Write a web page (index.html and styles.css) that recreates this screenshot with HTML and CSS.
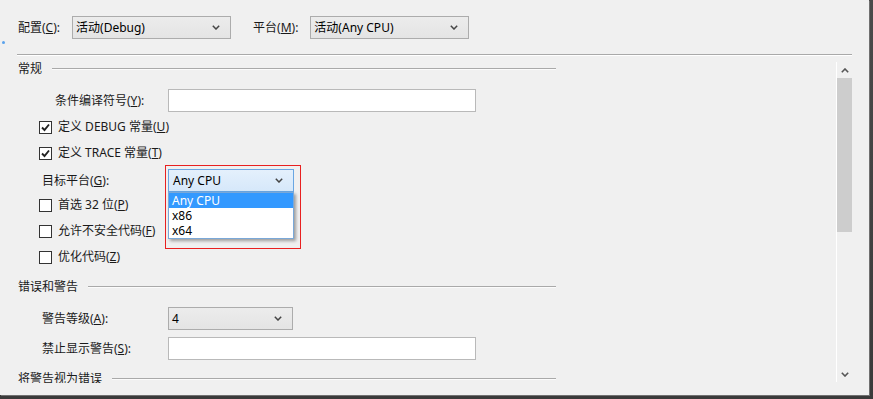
FILE: index.html
```html
<!DOCTYPE html>
<html lang="zh-CN">
<head>
<meta charset="utf-8">
<title>生成</title>
<link rel="stylesheet" href="styles.css">
</head>
<body>
<div class="window">
  <span class="blue-dot"></span>
  <div class="toolbar">
    <span class="tlabel">配置(<u>C</u>):</span>
    <div class="combo combo-config"><span>活动(Debug)</span><svg class="chev" width="8" height="5" viewBox="0 0 8 5"><polyline points="0.8,0.8 4,4 7.2,0.8" fill="none" stroke="#444" stroke-width="1.5"/></svg></div>
    <span class="tlabel tlabel-platform">平台(<u>M</u>):</span>
    <div class="combo combo-platform"><span>活动(Any CPU)</span><svg class="chev" width="8" height="5" viewBox="0 0 8 5"><polyline points="0.8,0.8 4,4 7.2,0.8" fill="none" stroke="#444" stroke-width="1.5"/></svg></div>
  </div>
  <div class="sep"></div>
  <div class="main">
    <div class="content">
      <div class="heading h-general"><span>常规</span><i class="hline"></i></div>

      <div class="row row-symbols">
        <span class="label label-wide">条件编译符号(<u>Y</u>):</span>
        <div class="textbox"></div>
      </div>

      <div class="check-row cr1"><span class="box checked"><svg width="11" height="11" viewBox="0 0 11 11"><polyline points="2,5.5 4.5,8 9,2.5" fill="none" stroke="#222" stroke-width="1.9"/></svg></span><span>定义 DEBUG 常量(<u>U</u>)</span></div>
      <div class="check-row"><span class="box checked"><svg width="11" height="11" viewBox="0 0 11 11"><polyline points="2,5.5 4.5,8 9,2.5" fill="none" stroke="#222" stroke-width="1.9"/></svg></span><span>定义 TRACE 常量(<u>T</u>)</span></div>

      <div class="row row-target">
        <span class="label">目标平台(<u>G</u>):</span>
        <div class="target-wrap">
          <div class="combo combo-focus"><span>Any CPU</span><svg class="chev" width="8" height="5" viewBox="0 0 8 5"><polyline points="0.8,0.8 4,4 7.2,0.8" fill="none" stroke="#444" stroke-width="1.5"/></svg></div>
          <ul class="droplist">
            <li class="sel">Any CPU</li>
            <li>x86</li>
            <li>x64</li>
          </ul>
          <div class="redmark"></div>
        </div>
      </div>

      <div class="check-row"><span class="box"></span><span>首选 32 位(<u>P</u>)</span></div>
      <div class="check-row"><span class="box"></span><span>允许不安全代码(<u>F</u>)</span></div>
      <div class="check-row"><span class="box"></span><span>优化代码(<u>Z</u>)</span></div>

      <div class="heading h-errors"><span>错误和警告</span><i class="hline"></i></div>

      <div class="row row-level">
        <span class="label">警告等级(<u>A</u>):</span>
        <div class="combo combo-level"><span>4</span><svg class="chev" width="8" height="5" viewBox="0 0 8 5"><polyline points="0.8,0.8 4,4 7.2,0.8" fill="none" stroke="#444" stroke-width="1.5"/></svg></div>
      </div>
      <div class="row row-suppress">
        <span class="label">禁止显示警告(<u>S</u>):</span>
        <div class="textbox"></div>
      </div>

      <div class="heading h-treat"><span>将警告视为错误</span><i class="hline"></i></div>
    </div>
    <div class="scrollbar">
      <div class="sb-btn"><svg width="8" height="5" viewBox="0 0 8 5"><polyline points="0.8,4.2 4,1 7.2,4.2" fill="none" stroke="#555" stroke-width="1.6"/></svg></div>
      <div class="sb-thumb"></div>
      <div class="sb-track"></div>
      <div class="sb-btn"><svg width="8" height="5" viewBox="0 0 8 5"><polyline points="0.8,0.8 4,4 7.2,0.8" fill="none" stroke="#555" stroke-width="1.6"/></svg></div>
    </div>
  </div>
</div>
</body>
</html>
```
FILE: styles.css
```css
* { box-sizing: border-box; }

html, body {
  margin: 0;
  padding: 0;
}

body {
  width: 873px;
  height: 399px;
  background: linear-gradient(#4a4a4a, #3a3a3a);
  font-family: "Segoe UI", "Noto Sans", "Noto Sans CJK SC", sans-serif;
  font-size: 12px;
  line-height: 16px;
  color: #1a1a1a;
  overflow: hidden;
}

u { text-decoration: underline; text-underline-offset: 1px; }

.window {
  position: relative;
  width: 869px;
  height: 395px;
  background: #f0f0f0;
  overflow: hidden;
  box-shadow: 1px 1px 0 #707070;
}

.blue-dot {
  position: absolute;
  left: 2px;
  top: 41px;
  width: 3px;
  height: 3px;
  border-radius: 50%;
  background: #5aa2ec;
}

/* toolbar */
.toolbar {
  display: flex;
  align-items: center;
  height: 39px;
  padding: 16px 0 0 18px;
}

.tlabel { margin-right: 12px; }
.tlabel-platform { margin-left: 22px; margin-right: 12px; }

.combo {
  display: flex;
  align-items: center;
  justify-content: space-between;
  height: 23px;
  padding: 0 10px 0 3px;
  border: 1px solid #acacac;
  background: linear-gradient(#ececec, #e4e4e4);
  color: #000;
}

.combo-config { width: 159px; }
.combo-platform { width: 159px; }
.combo-level { width: 125px; }

.chev { display: block; flex: none; }

.sep {
  margin: 15px 0 0 17px;
  width: 835px;
  height: 2px;
  border-top: 1px solid #a9a9a9;
  border-bottom: 1px solid #ffffff;
}

/* main scroll area */
.main {
  display: flex;
  margin-top: 5px;
  height: 322px;
}

.content {
  width: 836px;
  height: 322px;
  overflow: hidden;
  padding-left: 18px;
}

.heading {
  display: flex;
  align-items: center;
  width: 538px;
  height: 16px;
  color: #1a1a1a;
}

.heading span { flex: none; margin-right: 10px; }

.hline {
  flex: 1;
  height: 2px;
  border-top: 1px solid #a9a9a9;
  border-bottom: 1px solid #fbfbfb;
}

.h-errors { margin-top: 9px; }
.h-treat { margin-top: 11px; }

.row {
  display: flex;
  align-items: center;
  height: 23px;
}

.label {
  width: 150px;
  padding-left: 24px;
  flex: none;
}
.label-wide { padding-left: 37px; }

.row-symbols { margin-top: 12px; }
.row-target { margin-top: 3px; }
.row-level { margin-top: 12px; }
.row-suppress { margin-top: 7px; }

.textbox {
  width: 308px;
  height: 23px;
  background: #fff;
  border: 1px solid #b9b9b9;
}

.check-row {
  display: flex;
  align-items: center;
  height: 26px;
  padding-left: 21px;
}
.cr1 { margin-top: 2px; }

.box {
  flex: none;
  width: 13px;
  height: 13px;
  margin-right: 6px;
  border: 1px solid #333;
  background: #fff;
  display: flex;
  align-items: center;
  justify-content: center;
}
.box svg { display: block; }

/* target platform with open dropdown */
.target-wrap {
  position: relative;
  width: 126px;
  height: 23px;
}

.combo-focus {
  width: 126px;
  border-color: #6aa6e2;
  background: linear-gradient(#e4f0fc, #d6e8fa);
  padding-left: 4px;
}

.droplist {
  position: absolute;
  left: 0;
  top: 23px;
  width: 126px;
  margin: 0;
  padding: 0;
  list-style: none;
  background: #fff;
  border: 1px solid #7aa8d8;
  box-shadow: 2px 2px 3px rgba(0, 0, 0, 0.35);
  z-index: 2;
}

.droplist li {
  height: 15px;
  line-height: 15px;
  padding-left: 3px;
  color: #000;
}

.droplist li.sel {
  background: #3399ff;
  color: #fff;
}

.redmark {
  position: absolute;
  left: -3px;
  top: -4px;
  width: 136px;
  height: 84px;
  border: 1px solid #e82020;
  z-index: 3;
  pointer-events: none;
}

/* scrollbar */
.scrollbar {
  display: flex;
  flex-direction: column;
  width: 16px;
  height: 320px;
  margin-top: 1px;
  border-left: 1px solid #ffffff;
}

.sb-btn {
  height: 16px;
  display: flex;
  align-items: center;
  justify-content: center;
}
.sb-btn svg { display: block; }

.sb-thumb {
  height: 154px;
  background: #cdcdcd;
}

.sb-track { flex: 1; }
```
